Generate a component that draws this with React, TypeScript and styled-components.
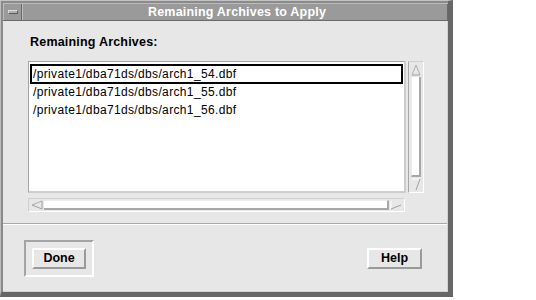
import React from 'react';
import styled, { createGlobalStyle } from 'styled-components';

const GlobalStyle = createGlobalStyle`
  * {
    box-sizing: border-box;
  }
  body {
    margin: 0;
    background: #ffffff;
    font-family: "Liberation Sans", Arial, sans-serif;
  }
`;

const Page = styled.div`
  width: 536px;
  height: 300px;
  background: #ffffff;
`;

const Window = styled.div`
  width: 453px;
  height: 297px;
  display: flex;
  flex-direction: column;
  border-top: 1px solid #c4c4c4;
  border-left: 1px solid #bdbdbd;
  border-right: 5px solid #666666;
  border-bottom: 5px solid #666666;
  padding: 2px 0 0 2px;
  background: #8a8a8a;
`;

const TitleBar = styled.div`
  display: flex;
  height: 18px;
  border-top: 1px solid #bcbcbc;
  border-bottom: 1px solid #6a6a6a;
  background: #9a9a9a;
`;

const MenuButton = styled.div`
  width: 19px;
  display: flex;
  align-items: center;
  justify-content: center;
  border-right: 1px solid #6a6a6a;
  border-left: 1px solid #bcbcbc;
`;

const MenuBar = styled.div`
  width: 10px;
  height: 4px;
  background: #b0b0b0;
  border-top: 1px solid #dcdcdc;
  border-left: 1px solid #dcdcdc;
  border-bottom: 1px solid #5c5c5c;
  border-right: 1px solid #5c5c5c;
`;

const Title = styled.div`
  flex: 1;
  display: flex;
  align-items: center;
  justify-content: center;
  border-left: 1px solid #bcbcbc;
  border-right: 1px solid #6a6a6a;
  color: #ffffff;
  font-weight: bold;
  font-size: 12.5px;
  letter-spacing: 0.2px;
  padding-left: 4px;
`;

const Content = styled.div`
  flex: 1;
  display: flex;
  flex-direction: column;
  background: #e7e7e7;
  border-right: 1px solid #d2d2d2;
  border-bottom: 1px solid #d2d2d2;
`;

const TopSection = styled.div`
  padding: 14px 0 0 25px;
  height: 202px;
`;

const Label = styled.div`
  font-size: 12.5px;
  font-weight: bold;
  letter-spacing: 0.2px;
  line-height: 15px;
  color: #000;
  margin: 0 0 11px 2px;
`;

const Scrolled = styled.div`
  display: grid;
  grid-template-columns: 378px 16px;
  grid-template-rows: 132px 14px;
  column-gap: 2px;
  row-gap: 5px;
`;

const ListBox = styled.div`
  background: #ffffff;
  border-top: 1px solid #a4a4a4;
  border-left: 1px solid #a4a4a4;
  border-right: 2px solid #cdcdcd;
  border-bottom: 2px solid #cdcdcd;
  padding: 3px 2px 0 2px;
`;

const Row = styled.div<{ $selected?: boolean }>`
  height: 18px;
  line-height: 18px;
  font-size: 12px;
  letter-spacing: 0.35px;
  color: #000;
  padding-left: 2px;
  box-shadow: ${(p) =>
    p.$selected ? '0 0 0 1px #000, inset 0 0 0 1px #000' : 'none'};
`;

const VTrough = styled.div`
  display: flex;
  flex-direction: column;
  border-left: 1px solid #a8a8a8;
  border-top: 1px solid #d0d0d0;
  border-right: 1px solid #ffffff;
  border-bottom: 1px solid #ffffff;
  padding: 1px 2px 1px 2px;
  background: #e7e7e7;
`;

const HTrough = styled.div`
  display: flex;
  border-left: 1px solid #d0d0d0;
  border-top: 1px solid #d0d0d0;
  border-right: 1px solid #ffffff;
  border-bottom: 1px solid #ffffff;
  padding: 1px;
  background: #e7e7e7;
  margin-right: 1px;
`;

const VThumb = styled.div`
  flex: 1;
  background: #ffffff;
  border-left: 1px solid #ececec;
  border-right: 2px solid #a8a8a8;
  border-bottom: 2px solid #a8a8a8;
  margin: 1px 0;
`;

const HThumb = styled.div`
  flex: 1;
  background: #ffffff;
  border-top: 1px solid #ececec;
  border-right: 2px solid #a8a8a8;
  border-bottom: 2px solid #a8a8a8;
  margin: 0 1px;
`;

const Arrow = styled.svg`
  display: block;
  flex: none;
`;

const Separator = styled.div`
  height: 2px;
  border-top: 1px solid #a8a8a8;
  border-bottom: 1px solid #ffffff;
`;

const ButtonRow = styled.div`
  flex: 1;
  display: flex;
  align-items: center;
  justify-content: space-between;
  padding: 0 25px 0 21px;
`;

const DefaultFrame = styled.div`
  padding: 6px;
  border-top: 2px solid #a4a4a4;
  border-left: 2px solid #a4a4a4;
  border-right: 2px solid #ffffff;
  border-bottom: 2px solid #ffffff;
`;

const Button = styled.button<{ $w: number }>`
  width: ${(p) => p.$w}px;
  height: 21px;
  padding: 0;
  background: #e7e7e7;
  border-top: 2px solid #ffffff;
  border-left: 2px solid #ffffff;
  border-right: 2px solid #9a9a9a;
  border-bottom: 2px solid #9a9a9a;
  font-family: "Liberation Sans", Arial, sans-serif;
  font-size: 12.5px;
  font-weight: bold;
  color: #000;
`;

const files = [
  '/private1/dba71ds/dbs/arch1_54.dbf',
  '/private1/dba71ds/dbs/arch1_55.dbf',
  '/private1/dba71ds/dbs/arch1_56.dbf',
];

const UpArrow = () => (
  <Arrow width="10" height="13" viewBox="0 0 10 13">
    <polyline points="1,12 5,2 9,12" fill="none" stroke="#b0b0b0" strokeWidth="1" />
    <line x1="1" y1="12" x2="9" y2="12" stroke="#a0a0a0" />
  </Arrow>
);

const DownArrow = () => (
  <Arrow width="10" height="13" viewBox="0 0 10 13">
    <polyline points="1,1 9,1" fill="none" stroke="#ffffff" />
    <line x1="9" y1="1" x2="5" y2="12" stroke="#a0a0a0" />
  </Arrow>
);

const LeftArrow = () => (
  <Arrow width="13" height="10" viewBox="0 0 13 10">
    <line x1="12" y1="1" x2="2" y2="5" stroke="#b0b0b0" />
    <line x1="2" y1="5" x2="12" y2="9" stroke="#a0a0a0" />
    <line x1="12" y1="1" x2="12" y2="9" stroke="#a0a0a0" />
  </Arrow>
);

const RightArrow = () => (
  <Arrow width="13" height="10" viewBox="0 0 13 10">
    <line x1="1" y1="1" x2="1" y2="9" stroke="#ffffff" />
    <line x1="1" y1="9" x2="11" y2="5" stroke="#a0a0a0" />
  </Arrow>
);

const App: React.FC = () => {
  return (
    <Page>
      <GlobalStyle />
      <Window>
        <TitleBar>
          <MenuButton>
            <MenuBar />
          </MenuButton>
          <Title>Remaining Archives to Apply</Title>
        </TitleBar>
        <Content>
          <TopSection>
            <Label>Remaining Archives:</Label>
            <Scrolled>
              <ListBox>
                {files.map((f, i) => (
                  <Row key={f} $selected={i === 0}>
                    {f}
                  </Row>
                ))}
              </ListBox>
              <VTrough>
                <UpArrow />
                <VThumb />
                <DownArrow />
              </VTrough>
              <HTrough>
                <LeftArrow />
                <HThumb />
                <RightArrow />
              </HTrough>
            </Scrolled>
          </TopSection>
          <Separator />
          <ButtonRow>
            <DefaultFrame>
              <Button $w={54}>Done</Button>
            </DefaultFrame>
            <Button $w={55}>Help</Button>
          </ButtonRow>
        </Content>
      </Window>
    </Page>
  );
};

export default App;
